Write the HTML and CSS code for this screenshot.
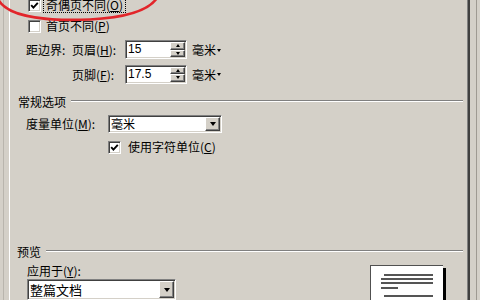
FILE: index.html
```html
<!DOCTYPE html>
<html lang="zh-CN">
<head>
<meta charset="utf-8">
<title>页面设置 - 版式</title>
<link rel="stylesheet" href="styles.css">
</head>
<body>
<div class="dialog">
  <div class="edge-left"></div>
  <div class="panel">
    <div class="row row-first">
      <span class="chk"><svg class="tick" width="9" height="9" viewBox="0 0 9 9"><polyline points="1.2,4.2 3.4,6.6 7.8,1.8" fill="none" stroke="#000" stroke-width="1.9"/></svg></span>
      <span class="opt focus">奇偶页不同(<u>O</u>)</span>
    </div>
    <div class="row row-second">
      <span class="chk"></span>
      <span class="opt">首页不同(<u>P</u>)</span>
    </div>
    <div class="margins">
      <span class="m-title">距边界:</span>
      <span class="m-label">页眉(<u>H</u>):</span>
      <span class="spin"><span class="spin-val">15</span><span class="spin-btns"><span class="sb up"></span><span class="sb down"></span></span></span>
      <span class="unit">毫米<i class="caret"></i></span>
      <span></span>
      <span class="m-label">页脚(<u>F</u>):</span>
      <span class="spin"><span class="spin-val">17.5</span><span class="spin-btns"><span class="sb up"></span><span class="sb down"></span></span></span>
      <span class="unit">毫米<i class="caret"></i></span>
    </div>
    <div class="group general">
      <div class="group-head"><span class="group-title">常规选项</span><span class="etch"></span></div>
      <div class="row units">
        <span class="u-label">度量单位(<u>M</u>):</span>
        <span class="combo"><span class="combo-text">毫米</span><span class="combo-btn"><i class="arrow"></i></span></span>
      </div>
      <div class="row charunit">
        <span class="chk"><svg class="tick" width="9" height="9" viewBox="0 0 9 9"><polyline points="1.2,4.2 3.4,6.6 7.8,1.8" fill="none" stroke="#000" stroke-width="1.9"/></svg></span>
        <span class="opt plain">使用字符单位(<u>C</u>)</span>
      </div>
    </div>
    <div class="group preview">
      <div class="group-head"><span class="group-title">预览</span><span class="etch"></span></div>
      <div class="preview-body">
        <div class="apply">
          <div class="apply-label">应用于(<u>Y</u>):</div>
          <span class="combo wide"><span class="combo-text">整篇文档</span><span class="combo-btn"><i class="arrow"></i></span></span>
        </div>
        <div class="page">
          <div class="pl indent"></div>
          <div class="pl"></div>
          <div class="pl"></div>
          <div class="pl short"></div>
          <div class="pl indent gap"></div>
        </div>
      </div>
    </div>
  </div>
  <div class="edge-right"></div>
</div>
<svg class="annot" width="170" height="30" viewBox="0 0 170 30">
  <path d="M -2 -1 C 8 19 55 21 90 19.5 C 128 17.5 149 10 157 -2" fill="none" stroke="#e2252a" stroke-width="2.6"/>
</svg>
</body>
</html>
```

FILE: styles.css
```css
* { box-sizing: border-box; }
html, body { margin: 0; padding: 0; }
body {
  width: 480px;
  height: 300px;
  overflow: hidden;
  position: relative;
  background: #d4d0c8;
  font-family: "Noto Sans CJK SC", "Liberation Sans", sans-serif;
  font-size: 12px;
  color: #000;
}
u { text-decoration: underline; text-underline-offset: 1px; }

.dialog { display: flex; width: 480px; height: 300px; overflow: hidden; }
.edge-left {
  width: 9px;
  flex: none;
  background: linear-gradient(to right, transparent 3px, #b9b5ad 3px, #b9b5ad 4px, transparent 4px);
}
.edge-right {
  width: 10px;
  flex: none;
  background: linear-gradient(to right, transparent 6px, #9e9a92 6px, #9e9a92 7px, transparent 7px);
}
.panel {
  width: 461px;
  flex: none;
  display: flex;
  flex-direction: column;
  overflow: hidden;
  border-left: 1px solid #ffffff;
  border-right: 2px solid #404040;
  box-shadow: inset -1px 0 0 #808080;
}
.panel > * { flex: none; }

.row { display: flex; align-items: center; }
.row-first { height: 22px; margin-top: -6px; padding-left: 18px; }
.row-second { height: 20px; padding-left: 18px; }

.chk {
  width: 13px;
  height: 13px;
  flex: none;
  background: #fff;
  border: 1px solid;
  border-color: #808080 #ffffff #ffffff #808080;
  box-shadow: inset 1px 1px 0 #404040, inset -1px -1px 0 #d4d0c8;
  display: flex;
  align-items: center;
  justify-content: center;
}
.tick { display: block; }
.opt {
  margin-left: 2px;
  padding: 0 2px;
  line-height: 14px;
  border: 1px solid transparent;
  white-space: nowrap;
}
.opt.focus { border: 1px dotted #000; }
.opt.plain { margin-left: 5px; border: 0; }

.margins {
  display: grid;
  grid-template-columns: 46px 53px 62px auto;
  grid-template-rows: 27px 22px;
  align-items: center;
  padding-left: 16px;
}
.m-title, .m-label { white-space: nowrap; }
.spin {
  height: 19px;
  display: flex;
  background: #fff;
  border: 1px solid;
  border-color: #808080 #ffffff #ffffff #808080;
  box-shadow: inset 1px 1px 0 #404040, inset -1px -1px 0 #d4d0c8;
  padding: 1px;
}
.spin-val {
  flex: 1;
  padding-left: 1px;
  font-family: "Liberation Sans", "DejaVu Sans", sans-serif;
  font-size: 12px;
  line-height: 15px;
}
.spin-btns { width: 15px; display: flex; flex-direction: column; }
.sb {
  flex: 1;
  background: #d4d0c8;
  border: 1px solid;
  border-color: #ffffff #404040 #404040 #ffffff;
  box-shadow: inset -1px -1px 0 #808080;
  display: flex;
  align-items: center;
  justify-content: center;
}
.sb::before { content: ""; width: 0; height: 0; border-left: 2.5px solid transparent; border-right: 2.5px solid transparent; }
.sb.up::before { border-bottom: 3px solid #000; }
.sb.down::before { border-top: 3px solid #000; }

.unit { margin-left: 5px; display: flex; align-items: center; white-space: nowrap; }
.caret {
  margin-left: 1px;
  margin-top: 1px;
  width: 0;
  height: 0;
  border-left: 2.5px solid transparent;
  border-right: 2.5px solid transparent;
  border-top: 3px solid #000;
}

.group-head { display: flex; align-items: center; height: 16px; padding-left: 8px; padding-right: 5px; }
.group-title { white-space: nowrap; }
.etch { flex: 1; margin-left: 5px; height: 2px; border-top: 1px solid #808080; border-bottom: 1px solid #ffffff; }
.general { margin-top: 8px; }

.units { height: 29px; padding-left: 16px; }
.u-label { width: 82px; white-space: nowrap; }
.combo {
  width: 114px;
  height: 18px;
  display: flex;
  background: #fff;
  border: 1px solid;
  border-color: #808080 #ffffff #ffffff #808080;
  box-shadow: inset 1px 1px 0 #404040, inset -1px -1px 0 #d4d0c8;
  padding: 1px;
}
.combo-text { flex: 1; padding-left: 1px; line-height: 14px; white-space: nowrap; }
.combo-btn {
  width: 15px;
  background: #d4d0c8;
  border: 1px solid;
  border-color: #ffffff #404040 #404040 #ffffff;
  box-shadow: inset -1px -1px 0 #808080;
  display: flex;
  align-items: center;
  justify-content: center;
}
.arrow { width: 0; height: 0; border-left: 3.5px solid transparent; border-right: 3.5px solid transparent; border-top: 4px solid #000; }
.charunit { height: 18px; padding-left: 98px; }

.preview { margin-top: 87px; }
.preview .group-head { padding-left: 7px; }
.preview-body { display: flex; align-items: flex-start; }
.apply { padding-left: 17px; }
.apply-label { height: 20px; padding-top: 3px; line-height: 17px; white-space: nowrap; }
.combo.wide { width: 149px; height: 21px; }
.combo.wide .combo-text { font-size: 13px; line-height: 17px; }
.page {
  margin-left: auto;
  margin-right: 25px;
  margin-top: 6px;
  width: 73px;
  height: 44px;
  background: #fff;
  border-top: 1px solid #505050;
  border-left: 1px solid #505050;
  box-shadow: 3px 3px 0 #000;
  padding-top: 8px;
  display: flex;
  flex-direction: column;
}
.pl { flex: none; height: 2px; background: #555; margin-left: 10px; width: 52px; margin-top: 2px; }
.pl:first-child { margin-top: 0; }
.pl.indent { margin-left: 13px; width: 49px; }
.pl.short { width: 17px; margin-top: 3px; }
.pl.gap { margin-top: 6px; }

.annot { position: absolute; left: 0; top: 0; }
```
